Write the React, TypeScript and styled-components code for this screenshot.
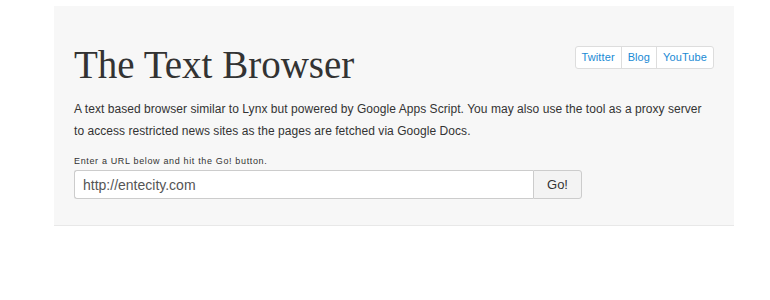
import styled, { createGlobalStyle } from "styled-components";

const GlobalStyle = createGlobalStyle`
  html, body {
    margin: 0;
    padding: 0;
    background: #fff;
  }
  body {
    font-family: "Liberation Sans", Arial, sans-serif;
    color: #333;
  }
`;

const Page = styled.div`
  padding: 6px 36px 0 54px;
`;

// gray hero panel
const Panel = styled.div`
  width: 680px;
  box-sizing: border-box;
  background: #f7f7f7;
  border-bottom: 1px solid #e8e8e8;
  padding: 40px 20px 26px 20px;
`;

const Header = styled.div`
  display: flex;
  justify-content: space-between;
  align-items: flex-start;
`;

const Title = styled.h1`
  margin: 0;
  font-family: "Liberation Serif", "Times New Roman", serif;
  font-weight: normal;
  font-size: 39px;
  line-height: 38px;
  color: #333;
`;

const LinkGroup = styled.div`
  display: flex;
  border: 1px solid #ddd;
  border-radius: 3px;
  background: #fff;
`;

const LinkButton = styled.a<{ $last?: boolean }>`
  font-size: 11px;
  line-height: 21px;
  padding: 0 6px;
  letter-spacing: 0.1px;
  color: #1a8ad4;
  text-decoration: none;
  border-right: ${({ $last }) => ($last ? "none" : "1px solid #ddd")};
`;

const Intro = styled.p`
  margin: 14px 0 0 0;
  font-size: 12px;
  line-height: 22px;
  letter-spacing: 0.05px;
  color: #333;
`;

const Label = styled.div`
  margin-top: 14px;
  font-size: 9px;
  letter-spacing: 0.65px;
  color: #333;
`;

const Form = styled.form`
  display: flex;
  margin-top: 4px;
`;

const UrlInput = styled.input`
  width: 459px;
  height: 29px;
  box-sizing: border-box;
  border: 1px solid #ccc;
  border-right: none;
  border-radius: 3px 0 0 3px;
  padding: 0 8px;
  font-family: "Liberation Sans", Arial, sans-serif;
  font-size: 14px;
  color: #555;
  background: #fff;
  outline: none;
`;

const GoButton = styled.button`
  width: 49px;
  height: 29px;
  box-sizing: border-box;
  border: 1px solid #ccc;
  border-radius: 0 3px 3px 0;
  background: #f3f3f3;
  font-family: "Liberation Sans", Arial, sans-serif;
  font-size: 13px;
  color: #333;
  padding: 0;
`;

export default function App() {
  const links = ["Twitter", "Blog", "YouTube"];
  return (
    <Page>
      <GlobalStyle />
      <Panel>
        <Header>
          <Title>The Text Browser</Title>
          <LinkGroup>
            {links.map((l, i) => (
              <LinkButton key={l} href="#" $last={i === links.length - 1}>
                {l}
              </LinkButton>
            ))}
          </LinkGroup>
        </Header>
        <Intro>
          A text based browser similar to Lynx but powered by Google Apps Script. You may also use the tool as a proxy server
          to access restricted news sites as the pages are fetched via Google Docs.
        </Intro>
        <Label>Enter a URL below and hit the Go! button.</Label>
        <Form onSubmit={(e) => e.preventDefault()}>
          <UrlInput defaultValue="http://entecity.com" />
          <GoButton type="submit">Go!</GoButton>
        </Form>
      </Panel>
    </Page>
  );
}
